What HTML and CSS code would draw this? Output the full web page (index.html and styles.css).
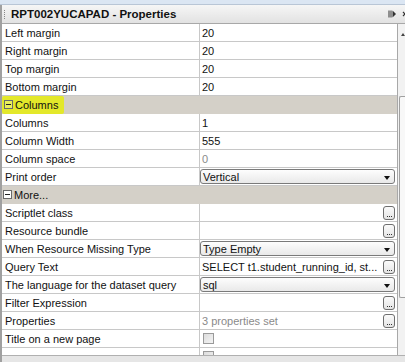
FILE: index.html
```html
<!DOCTYPE html>
<html>
<head>
<meta charset="utf-8">
<link rel="stylesheet" href="styles.css">
</head>
<body>
<div class="topstrip"></div>
<div class="panel">
  <div class="titlebar">
    <span class="grip"></span>
    <span class="title">RPT002YUCAPAD - Properties</span>
    <span class="tbicons">
      <svg width="8" height="8" viewBox="0 0 8 8"><rect x="0.5" y="0.5" width="1" height="7" fill="#333"/><rect x="2.5" y="0.5" width="1" height="7" fill="#333"/><path d="M4.5 0.5 L8 4 L4.5 7.5 Z" fill="#333"/></svg>
      <svg class="x" width="6" height="8" viewBox="0 0 6 8"><path d="M1 2 L5 6 M5 2 L1 6" stroke="#333" stroke-width="1.2"/></svg>
    </span>
  </div>
  <div class="body">
    <div class="table">
      <div class="row"><div class="k">Left margin</div><div class="v">20</div></div>
      <div class="row"><div class="k">Right margin</div><div class="v">20</div></div>
      <div class="row"><div class="k">Top margin</div><div class="v">20</div></div>
      <div class="row"><div class="k">Bottom margin</div><div class="v">20</div></div>
      <div class="row section"><div class="k"><span class="hl"><span class="minus"></span>Columns</span></div></div>
      <div class="row"><div class="k">Columns</div><div class="v">1</div></div>
      <div class="row"><div class="k">Column Width</div><div class="v">555</div></div>
      <div class="row"><div class="k">Column space</div><div class="v grey">0</div></div>
      <div class="row"><div class="k">Print order</div><div class="v"><div class="combo">Vertical<span class="arrow"></span></div></div></div>
      <div class="row section"><div class="k"><span class="minus"></span>More...</div></div>
      <div class="row"><div class="k">Scriptlet class</div><div class="v"><span class="fill"></span><span class="btn"><i></i><i></i><i></i></span></div></div>
      <div class="row"><div class="k">Resource bundle</div><div class="v"><span class="fill"></span><span class="btn"><i></i><i></i><i></i></span></div></div>
      <div class="row"><div class="k">When Resource Missing Type</div><div class="v"><div class="combo">Type Empty<span class="arrow"></span></div></div></div>
      <div class="row"><div class="k">Query Text</div><div class="v"><span class="fill">SELECT t1.student_running_id, st...</span><span class="btn"><i></i><i></i><i></i></span></div></div>
      <div class="row"><div class="k">The language for the dataset query</div><div class="v"><div class="combo">sql<span class="arrow"></span></div></div></div>
      <div class="row"><div class="k">Filter Expression</div><div class="v"><span class="fill"></span><span class="btn"><i></i><i></i><i></i></span></div></div>
      <div class="row"><div class="k">Properties</div><div class="v"><span class="fill grey">3 properties set</span><span class="btn"><i></i><i></i><i></i></span></div></div>
      <div class="row"><div class="k">Title on a new page</div><div class="v"><span class="check"></span></div></div>
      <div class="row"><div class="k"></div><div class="v"><span class="check"></span></div></div>
    </div>
    <div class="scrollbar">
      <span class="up"></span>
      <span class="thumb"></span>
    </div>
  </div>
  <div class="bottom"></div>
</div>
</body>
</html>
```
FILE: styles.css
```css
html, body {
  margin: 0;
  padding: 0;
  width: 405px;
  height: 362px;
  overflow: hidden;
  background: #ffffff;
  font-family: "Liberation Sans", Arial, sans-serif;
}
.topstrip {
  height: 4px;
  background: #dbe6f3;
  border-bottom: 1px solid #b9c6d6;
}
.panel {
  border-left: 2px solid #a0a0a0;
  display: flex;
  flex-direction: column;
  height: 357px;
  box-sizing: border-box;
}
.titlebar {
  height: 19px;
  box-sizing: border-box;
  display: flex;
  align-items: center;
  background: linear-gradient(#f6f6f6, #e2e2e2);
  border-bottom: 1px solid #a8a8a8;
}
.grip {
  width: 1px;
  height: 9px;
  margin-left: 2px;
  margin-right: 5px;
  border-left: 1px dotted #888;
}
.title {
  font-family: "Liberation Sans", Arial, sans-serif;
  font-weight: bold;
  font-size: 11.5px;
  color: #111;
  flex: 1;
}
.tbicons {
  display: flex;
  align-items: center;
  gap: 6px;
}
.tbicons svg { display: block; }
.tbicons .x { margin-right: -3px; }
.body {
  display: flex;
  flex: 1;
  overflow: hidden;
}
.table {
  width: 395px;
  border-right: 1px solid #a8a8a8;
  overflow: hidden;
}
.row {
  display: flex;
  height: 18px;
  box-sizing: border-box;
  border-bottom: 1px solid #c8c8c8;
  font-size: 11px;
  color: #111;
}
.k {
  width: 198px;
  border-right: 1px solid #c8c8c8;
  padding-left: 3px;
  box-sizing: border-box;
  display: flex;
  align-items: center;
  white-space: nowrap;
}
.v {
  flex: 1;
  display: flex;
  align-items: center;
  padding-left: 2px;
  padding-right: 1px;
  min-width: 0;
}
.grey { color: #8a8a8a; }
.section {
  background: #d4d0c8;
  border-bottom-color: #d4d0c8;
}
.section .k {
  border-right: none;
  padding-left: 1px;
  width: 100%;
}
.hl {
  display: flex;
  align-items: center;
  background: #e3e82a;
  height: 18px;
  padding-left: 2px;
  padding-right: 6px;
  margin-left: -1px;
  border-radius: 2px;
}
.minus {
  display: inline-block;
  width: 7px;
  height: 7px;
  border: 1px solid #6a6a6a;
  background: #fff;
  position: relative;
  margin-right: 2px;
}
.minus::after {
  content: "";
  position: absolute;
  left: 1px;
  right: 1px;
  top: 3px;
  height: 1px;
  background: #222;
}
.hl .minus { background: #e9ee5a; }
.combo {
  flex: 1;
  height: 15px;
  box-sizing: border-box;
  border: 1px solid #7a7a7a;
  border-radius: 3px;
  background: linear-gradient(#fdfdfd, #e9e9e9);
  display: flex;
  align-items: center;
  padding-left: 2px;
  margin-left: -2px;
  margin-right: 1px;
  position: relative;
}
.arrow {
  position: absolute;
  right: 4px;
  top: 6px;
  width: 0;
  height: 0;
  border-left: 3px solid transparent;
  border-right: 3px solid transparent;
  border-top: 4px solid #111;
}
.fill {
  flex: 1;
  white-space: nowrap;
  overflow: hidden;
}
.btn {
  width: 12px;
  height: 14px;
  box-sizing: border-box;
  border: 1px solid #6e6e6e;
  border-radius: 3px;
  background: linear-gradient(#fbfbfb, #e4e4e4);
  margin-right: 1px;
  display: flex;
  align-items: flex-end;
  justify-content: center;
  gap: 1px;
  padding-bottom: 2px;
}
.btn i {
  display: block;
  width: 1px;
  height: 1px;
  background: #333;
}
.check {
  width: 11px;
  height: 11px;
  box-sizing: border-box;
  border: 1px solid #9a9a9a;
  background: linear-gradient(135deg, #dcdcdc, #f4f4f4);
  margin-left: 1px;
}
.scrollbar {
  flex: 1;
  background: #f2f2f2;
  display: flex;
  flex-direction: column;
  align-items: flex-end;
}
.up {
  margin-top: 9px;
  width: 0;
  height: 0;
  border-left: 2px solid transparent;
  border-right: 2px solid transparent;
  border-bottom: 3px solid #444;
}
.thumb {
  margin-top: 60px;
  width: 5px;
  height: 200px;
  border: 1px solid #a0a0a0;
  border-right: none;
  border-radius: 2px 0 0 2px;
  background: #f8f8f8;
}
.bottom {
  height: 6px;
  background: #e6e6e6;
  border-top: 1px solid #b0b0b0;
}
```
